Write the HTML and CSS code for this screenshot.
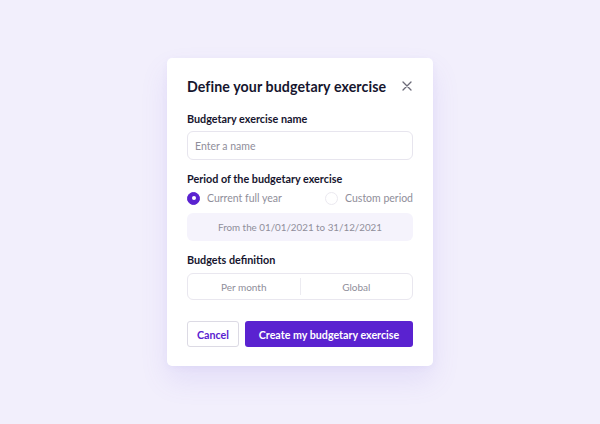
FILE: index.html
```html
<!DOCTYPE html>
<html>
<head>
<meta charset="utf-8">
<link rel="stylesheet" href="styles.css">
</head>
<body>
<div class="page">
  <div class="card">
    <div class="head">
      <h1 class="title">Define your budgetary exercise</h1>
      <button class="close" aria-label="Close">
        <svg width="10" height="10" viewBox="0 0 10 10"><path d="M1 1L9 9M9 1L1 9" stroke="#6b6a78" stroke-width="1.3" stroke-linecap="round"/></svg>
      </button>
    </div>
    <div class="field f1">
      <div class="label">Budgetary exercise name</div>
      <div class="input">Enter a name</div>
    </div>
    <div class="field f2">
      <div class="label">Period of the budgetary exercise</div>
      <div class="radios">
        <div class="radio"><span class="dot on"></span>Current full year</div>
        <div class="radio"><span class="dot"></span>Custom period</div>
      </div>
      <div class="range">From the 01/01/2021 to 31/12/2021</div>
    </div>
    <div class="field f3">
      <div class="label">Budgets definition</div>
      <div class="seg">
        <div class="seg-item">Per month</div>
        <div class="seg-sep"></div>
        <div class="seg-item">Global</div>
      </div>
    </div>
    <div class="actions">
      <button class="btn cancel">Cancel</button>
      <button class="btn primary">Create my budgetary exercise</button>
    </div>
  </div>
</div>
</body>
</html>
```
FILE: styles.css
```css
* { box-sizing: border-box; }
html, body { margin: 0; padding: 0; }
body {
  width: 600px;
  height: 424px;
  background: #f2effc;
  font-family: "Lato", "Noto Sans", sans-serif;
  color: #16152e;
  overflow: hidden;
}
.page {
  display: flex;
  justify-content: center;
  padding-top: 58px;
}
.card {
  width: 266px;
  height: 308px;
  background: #ffffff;
  border-radius: 5px;
  padding: 17px 20px 0 20px;
  box-shadow: 0 14px 28px rgba(120, 95, 220, 0.12), 0 2px 6px rgba(120, 95, 220, 0.06);
}
.head {
  display: flex;
  align-items: center;
  justify-content: space-between;
  height: 22px;
}
.title {
  margin: 0;
  font-size: 14.2px;
  font-weight: 700;
  letter-spacing: 0.1px;
  color: #16152e;
}
.close {
  border: 0;
  background: none;
  padding: 0;
  margin-right: 1px;
  width: 10px;
  height: 10px;
  display: flex;
}
.f1 { margin-top: 15px; }
.f2 { margin-top: 12px; }
.f3 { margin-top: 12px; }
.label {
  font-size: 10.8px;
  font-weight: 700;
  color: #16152e;
  line-height: 14px;
}
.input {
  margin-top: 5px;
  height: 29px;
  border: 1px solid #e7e5ee;
  border-radius: 6px;
  padding: 0 7px;
  display: flex;
  align-items: center;
  font-size: 10.5px;
  color: #8f8e9a;
}
.radios {
  margin-top: 5px;
  display: flex;
  justify-content: space-between;
  height: 14px;
}
.radio {
  display: flex;
  align-items: center;
  font-size: 10.5px;
  color: #8f8e9a;
  gap: 7px;
}
.dot {
  width: 13px;
  height: 13px;
  border-radius: 50%;
  border: 1px solid #ebe9f0;
  background: #fff;
  display: inline-block;
  position: relative;
}
.dot.on {
  background: #5a22d0;
  border-color: #5a22d0;
}
.dot.on::after {
  content: "";
  position: absolute;
  width: 4px;
  height: 4px;
  border-radius: 50%;
  background: #fff;
  left: 3.5px;
  top: 3.5px;
}
.range {
  margin-top: 8px;
  height: 28px;
  border-radius: 6px;
  background: #f5f3fc;
  display: flex;
  align-items: center;
  justify-content: center;
  font-size: 9.8px;
  color: #8f8e9a;
}
.seg {
  margin-top: 6px;
  height: 27px;
  border: 1px solid #e9e7ef;
  border-radius: 6px;
  display: flex;
  align-items: center;
}
.seg-item {
  flex: 1;
  text-align: center;
  font-size: 10px;
  color: #8f8e9a;
}
.seg-sep {
  width: 1px;
  height: 17px;
  background: #ecebf1;
}
.actions {
  margin-top: 21px;
  display: flex;
  gap: 6px;
}
.btn {
  height: 26px;
  border-radius: 3px;
  font-family: inherit;
  font-size: 10.7px;
  font-weight: 700;
  padding: 0;
}
.cancel {
  width: 52px;
  background: #fff;
  border: 1px solid #dcdae4;
  color: #5a22d0;
}
.primary {
  flex: 1;
  background: #5a22d0;
  border: 0;
  color: #fff;
}
```
